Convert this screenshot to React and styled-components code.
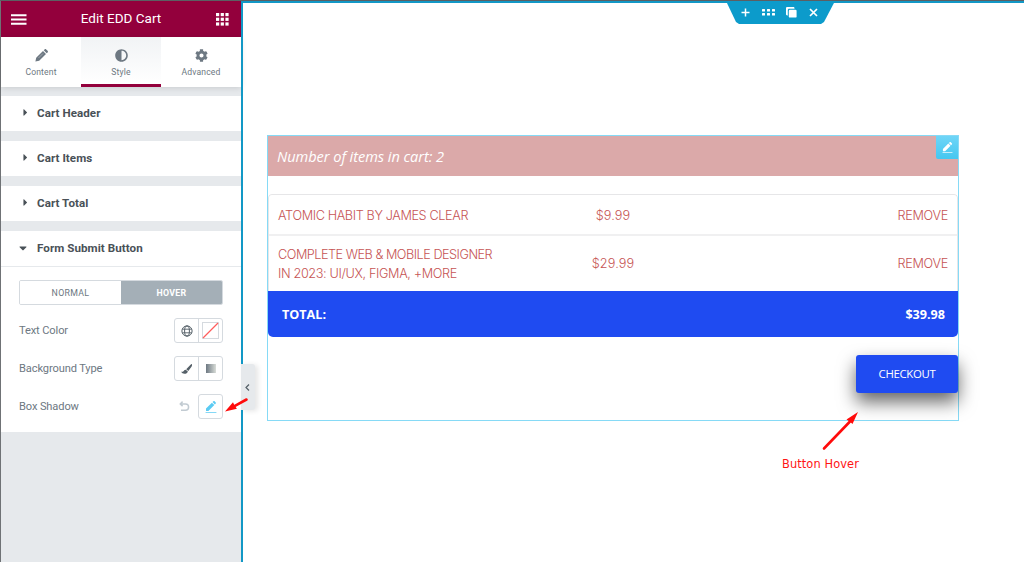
import styled, {createGlobalStyle, css} from 'styled-components'
import {FaAdjust, FaCog, FaCaretRight, FaCaretDown} from 'react-icons/fa'


const GlobalStyle = createGlobalStyle`
* {
  box-sizing: border-box;
}
body {
  margin: 0;
  background: #fff;
  font-family: Roboto, sans-serif;
  overflow: hidden;
}
`

const Page = styled.div`
display: flex;
width: 1024px;
height: 562px;
border-top: 1px solid #5c5f63;
`

const Sidebar = styled.aside`
width: 241px;
flex-shrink: 0;
background: #e6e9ec;
border-left: 1px solid #6f7275;
`

const PanelHeader = styled.header`
height: 36px;
padding: 0 12px 0 10px;
display: flex;
align-items: center;
justify-content: space-between;
background: #93003c;
color: #fff;
`

const PanelTitle = styled.h1`
margin: 0;
font-size: 13.5px;
font-weight: 400;
line-height: 16px;
padding: 0 1px 2px 0;
`

const Tabs = styled.nav`
display: flex;
height: 50px;
background: #fff;
box-shadow: 0 1px 6px rgba(0, 0, 0, 0.13);
`

const Tab = styled.a`
flex: 1;
display: flex;
flex-direction: column;
align-items: center;
padding-top: 12px;
gap: 4px;
font-size: 8.6px;
line-height: 12px;
letter-spacing: 0.15px;
color: #6d7882;
border-bottom: 3px solid transparent;

${({$active}) => $active && css`
  background: linear-gradient(#f1f3f5, #fff);
  border-bottom-color: #93003c;
`}
`

const Section = styled.div`
height: 35px;
margin-top: 10px;
padding: 0 20px 2px;
display: flex;
align-items: center;
background: #fff;
color: #495157;
font-size: 11.6px;
letter-spacing: 0.06px;
font-weight: 700;

&:first-of-type {
  margin-top: 9px;
}
`

const Caret = styled.span`
width: 16px;
display: flex;
font-size: 11px;
margin-left: ${({$open}) => $open ? '-4px' : '-1px'};
margin-right: ${({$open}) => $open ? '4px' : '1px'};
`

const Controls = styled.div`
height: 166px;
padding: 13px 18px 0;
border-top: 1px solid #e6e9ec;
background: #fff;
`

const Toggle = styled.div`
display: flex;
height: 25px;
margin-bottom: 13px;
border: 1px solid #d5dadf;
border-radius: 2px;
overflow: hidden;
`

const ToggleItem = styled.div`
flex: 1;
display: flex;
align-items: center;
justify-content: center;
font-size: 8.8px;
letter-spacing: 0.3px;
color: ${({$active}) => $active ? '#fff' : '#6d7882'};
background: ${({$active}) => $active ? '#a4afb7' : '#fff'};
font-weight: ${({$active}) => $active ? 700 : 400};
`

const Control = styled.div`
display: flex;
align-items: center;
justify-content: space-between;
height: 25px;
margin-bottom: 13px;
font-size: 11.1px;
letter-spacing: -0.12px;
color: #6d7882;
`

const ControlEnd = styled.div`
display: flex;
align-items: center;
gap: 8px;
`

const ButtonGroup = styled.div`
display: flex;
border: 1px solid #d5dadf;
border-radius: 3px;
overflow: hidden;
`

const IconBtn = styled.div`
width: ${({$width}) => $width || 23}px;
height: 23px;
display: flex;
align-items: center;
justify-content: center;
color: ${({$color}) => $color || '#556068'};

& + & {
  border-left: 1px solid #d5dadf;
}
`

const GradientIcon = styled.span`
width: 10px;
height: 9px;
background: linear-gradient(90deg, #6d7882, #d9ddd8);
`

const Preview = styled.main`
position: relative;
flex: 1;
border-top: 2px solid #1298c6;
border-left: 2px solid #1298c6;
padding: 132px 65px 0 24px;
`

const SectionHandle = styled.div`
position: absolute;
top: -2px;
left: 483px;
width: 109px;
height: 23px;
padding: 0 17px 0 15px;
display: flex;
align-items: center;
justify-content: space-between;
color: #fff;
background: #0c9bcb;
clip-path: polygon(0 0, 100% 0, 98px 21px, 95px 23px, 13px 23px, 10px 21px);
`

const CollapseTab = styled.div`
position: absolute;
top: 361px;
left: -2px;
width: 14px;
height: 46px;
padding-right: 1px;
display: flex;
align-items: center;
justify-content: center;
background: #e6e9ec;
border-radius: 0 3px 3px 0;
box-shadow: 3px 1px 5px rgba(0, 0, 0, 0.1);
`

const Widget = styled.section`
position: relative;
width: 692px;
height: 286px;
border: 1px solid #86daf6;
`

const EditHandle = styled.div`
position: absolute;
top: 0;
right: 0;
width: 22px;
height: 23px;
display: flex;
align-items: center;
justify-content: center;
background: linear-gradient(#6fd5f7, #45c7f0);
color: #fff;
border-bottom-left-radius: 2px;
`

const CartHeader = styled.div`
height: 40px;
padding: 0 9px;
display: flex;
align-items: center;
background: #dba9a9;
color: #fff;
font-family: "Open Sans", sans-serif;
font-size: 14.6px;
font-style: italic;
letter-spacing: -0.06px;
`

const Cart = styled.div`
margin-top: 18px;
border-radius: 4px 4px 5px 5px;
overflow: hidden;
`

const CartItems = styled.div`
border: 1px solid #e6e6e8;
border-bottom: 0;
border-radius: 4px 4px 0 0;
`

const CartRow = styled.div`
display: grid;
grid-template-columns: 268px 1fr 268px;
align-items: center;
height: ${({$last}) => $last ? 55 : 41}px;
padding: ${({$last}) => $last ? '0 9px' : '1px 9px 0'};
border-bottom: ${({$last}) => $last ? '0' : '2px solid #f0f0f1'};
font-family: Inter, sans-serif;
font-size: 12.7px;
font-weight: 300;
line-height: 19px;
color: #c65454;
`

const ItemName = styled.span`
display: flex;
flex-direction: column;
`

const NameLine = styled.span`
white-space: nowrap;
letter-spacing: ${({$spacing}) => $spacing}px;
`

const Price = styled.span`
text-align: center;
letter-spacing: 0.1px;
`

const Remove = styled.a`
text-align: right;
letter-spacing: -0.3px;
`

const Total = styled.div`
display: flex;
align-items: center;
justify-content: space-between;
height: 46px;
padding: 0 13px 0 14px;
background: #1f4bf1;
color: #fff;
font-family: "Open Sans", sans-serif;
font-size: 12.6px;
font-weight: 700;
`

const Checkout = styled.button`
display: flex;
align-items: center;
justify-content: center;
width: 102px;
height: 38px;
margin: 18px 0 0 auto;
padding: 0 0 2px;
border: 0;
border-radius: 3px;
background: #1f4bf1;
box-shadow: 0 9px 18px rgba(0, 0, 0, 0.6);
color: #fff;
font-family: "Open Sans", sans-serif;
font-size: 11.4px;
letter-spacing: -0.34px;
`

// notes drawn over the editor
const Arrow = styled.svg`
position: absolute;
left: ${({$x}) => $x}px;
top: ${({$y}) => $y}px;
overflow: visible;
z-index: 2;
`

const Note = styled.div`
position: absolute;
left: 539px;
top: 454px;
font-family: "DejaVu Sans", sans-serif;
font-size: 11.4px;
line-height: 14px;
color: #ff1414;
white-space: nowrap;
letter-spacing: 0.1px;
`

const Bars = () => (
    <svg width="16" height="11" viewBox="0 0 16 11">
        <path d="M0 1.2h15.500M0 5.5h15.500M0 9.8h15.500" stroke="#fff" strokeWidth="2" />
    </svg>
)

const Apps = () => (
    <svg width="13" height="13" viewBox="0 0 13 13" fill="#fff">
        {[0, 4.7, 9.4].map((y) => [0, 4.7, 9.4].map((x) => (
            <rect key={`${x}-${y}`} x={x} y={y} width="3.2" height="3.2" />
        )))}
    </svg>
)

const Pencil = () => (
    <svg width="13" height="13" viewBox="0 0 13 13" fill="currentColor">
        <path d="M.4 12.6l.8-3.8L8 2l3 3-6.8 6.8zM8.7 1.3l.9-.9c.5-.5 1.1-.5 1.6 0l1.4 1.4c.5.5.5 1.1 0 1.6l-.9.9z" />
        <path d="M3.5 9l4.5-4.500" stroke="#fff" strokeWidth=".35" />
    </svg>
)

const Brush = () => (
    <svg width="11" height="10" viewBox="0 0 11 10" fill="currentColor">
        <path d="M10.900.1c.3.900.1 2-.6 3L7.300 7 5.200 5.300 9.300.9c.5-.5 1.100-.8 1.600-.8zM4.700 5.700l2.200 1.700c-.5 1.500-1.700 2.300-3.400 2.300C2 9.700.8 9 .1 7.800c1.300.2 2-.1 2.600-.9.600-.8 1.200-1.200 2-1.200z" />
    </svg>
)

const Globe = () => (
    <svg width="12" height="12" viewBox="0 0 12 12" fill="none" stroke="currentColor">
        <circle cx="6" cy="6" r="5.1" />
        <ellipse cx="6" cy="6" rx="2.4" ry="5.1" />
        <path d="M1.4 4.2h9.2M1.4 7.8h9.2" strokeWidth=".9" />
    </svg>
)

const NoColor = () => (
    <svg width="17" height="17" viewBox="0 0 17 17" fill="none">
        <rect x=".5" y=".5" width="16" height="16" stroke="#d5dadf" />
        <path d="M1 16L16 1" stroke="#ff5c5c" strokeWidth="1.3" />
    </svg>
)

const Reset = () => (
    <svg width="11" height="11" viewBox="0 0 11 11" fill="none" stroke="#c2cbd2" strokeWidth="1.5">
        <path d="M3.600 .6L1.300 2.900l2.300 2.200M1.500 2.900h5C8.300 2.900 9.600 4 9.600 6S8.300 9.300 6.500 9.300H2" />
    </svg>
)

const EditPen = ({size = 12}) => (
    <svg width={size} height={size} viewBox="0 0 12 12" fill="currentColor">
        <path d="M1 10V7.5L6.9 1.700l2.400 2.400L3.400 10zM7.500 1.100L8.400.3c.4-.4.8-.4 1.200 0l1.100 1.100c.4.4.4.8 0 1.200L9.900 3.500z" />
        <path d="M.6 11h10.800v1H.6z" opacity=".75" />
    </svg>
)

const HandleIcons = () => (
    <>
        <svg width="9" height="9" viewBox="0 0 9 9" stroke="#fff" strokeWidth="1.5">
            <path d="M4.5 .5v8M.5 4.5h8" />
        </svg>
        <svg width="13" height="7" viewBox="0 0 13 7" fill="#fff">
            {[0, 4].map((y) => [0, 5, 10].map((x) => (
                <rect key={`${x}-${y}`} x={x} y={y} width="3" height="2.6" rx=".5" />
            )))}
        </svg>
        <svg width="11" height="11" viewBox="0 0 11 11" fill="#fff">
            <path d="M0 1.3C0 .5.5 0 1.3 0h6c.7 0 1.2.5 1.2 1.3v.5H3.2c-.8 0-1.4.6-1.4 1.4v5.3h-.5C.5 8.5 0 8 0 7.3z" />
            <rect x="2.8" y="2.8" width="7.8" height="7.8" rx="1.2" />
        </svg>
        <svg width="9" height="9" viewBox="0 0 9 9" stroke="#fff" strokeWidth="1.7">
            <path d="M1 1l7 7M8 1L1 8" />
        </svg>
    </>
)

const sections = ['Cart Header', 'Cart Items', 'Cart Total']

const App = () => {
    return (
        <>
            <GlobalStyle />
            <Page>
                <Sidebar>
                    <PanelHeader>
                        <Bars />
                        <PanelTitle>Edit EDD Cart</PanelTitle>
                        <Apps />
                    </PanelHeader>
                    <Tabs>
                        <Tab><Pencil />Content</Tab>
                        <Tab $active><FaAdjust size={13} />Style</Tab>
                        <Tab><FaCog size={13} />Advanced</Tab>
                    </Tabs>
                    {sections.map((name) => (
                        <Section key={name}><Caret><FaCaretRight /></Caret>{name}</Section>
                    ))}
                    <Section><Caret $open><FaCaretDown size={12} /></Caret>Form Submit Button</Section>
                    <Controls>
                        <Toggle>
                            <ToggleItem>NORMAL</ToggleItem>
                            <ToggleItem $active>HOVER</ToggleItem>
                        </Toggle>
                        <Control>
                            Text Color
                            <ButtonGroup>
                                <IconBtn><Globe /></IconBtn>
                                <IconBtn $width={24}><NoColor /></IconBtn>
                            </ButtonGroup>
                        </Control>
                        <Control>
                            Background Type
                            <ButtonGroup>
                                <IconBtn><Brush /></IconBtn>
                                <IconBtn $width={24}><GradientIcon /></IconBtn>
                            </ButtonGroup>
                        </Control>
                        <Control>
                            Box Shadow
                            <ControlEnd>
                                <Reset />
                                <ButtonGroup>
                                    <IconBtn $color="#5bcbf3"><EditPen /></IconBtn>
                                </ButtonGroup>
                            </ControlEnd>
                        </Control>
                    </Controls>
                </Sidebar>
                <Preview>
                    <SectionHandle><HandleIcons /></SectionHandle>
                    <Widget>
                        <CartHeader>Number of items in cart: 2</CartHeader>
                        <EditHandle><EditPen size={11} /></EditHandle>
                        <Cart>
                            <CartItems>
                                <CartRow>
                                    <ItemName>
                                        <NameLine $spacing={-0.38}>ATOMIC HABIT BY JAMES CLEAR</NameLine>
                                    </ItemName>
                                    <Price>$9.99</Price>
                                    <Remove>REMOVE</Remove>
                                </CartRow>
                                <CartRow $last>
                                    <ItemName>
                                        <NameLine $spacing={-0.49}>COMPLETE WEB &amp; MOBILE DESIGNER</NameLine>
                                        <NameLine $spacing={-0.36}>IN 2023: UI/UX, FIGMA, +MORE</NameLine>
                                    </ItemName>
                                    <Price>$29.99</Price>
                                    <Remove>REMOVE</Remove>
                                </CartRow>
                            </CartItems>
                            <Total><span>TOTAL:</span><span>$39.98</span></Total>
                        </Cart>
                        <Checkout>CHECKOUT</Checkout>
                    </Widget>
                    <CollapseTab>
                        <svg width="5" height="7" viewBox="0 0 5 7" fill="none" stroke="#556068" strokeWidth="1.2">
                            <path d="M4 .5L1 3.5l3 3" />
                        </svg>
                    </CollapseTab>
                    <Arrow $x={-19} $y={393} width="24" height="16" fill="#ff0b0b">
                        <path d="M22.5 3.5L10 10.3" stroke="#ff0b0b" strokeWidth="2.6" strokeLinecap="round" />
                        <path d="M1 15.5L9 6.3l1.4 3 2.5 3.5z" />
                    </Arrow>
                    <Arrow $x={580} $y={409} width="36" height="38" fill="#ff0b0b">
                        <path d="M1 36.5L27 9.5" stroke="#ff0b0b" strokeWidth="2.6" strokeLinecap="round" />
                        <path d="M35 0L29.5 12l-2.5-2.2-3.5-2.3z" />
                    </Arrow>
                    <Note>Button Hover</Note>
                </Preview>
            </Page>
        </>
    )
}

export default App
